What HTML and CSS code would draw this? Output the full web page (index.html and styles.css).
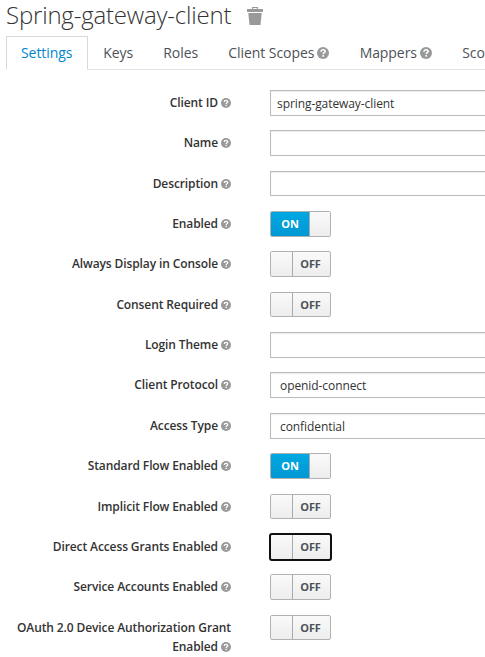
FILE: index.html
```html
<!DOCTYPE html>
<html lang="en">
<head>
<meta charset="utf-8">
<title>Spring-gateway-client</title>
<link rel="stylesheet" href="styles.css">
</head>
<body>
<svg class="defs" width="0" height="0">
  <symbol id="help" viewBox="0 0 12 12">
    <circle cx="6" cy="6" r="6" fill="#999"/>
    <path d="M4 4.7C4 3.4 4.9 2.8 6 2.8S8.1 3.4 8.1 4.5C8.1 5.7 6.2 5.7 6.2 7.1M6.2 8.1V9.7" fill="none" stroke="#fff" stroke-width="1.6"/>
  </symbol>
</svg>
<h1>Spring-gateway-client <svg class="trash" viewBox="0 0 16 18"><path fill="#999" fill-rule="evenodd" d="M0 2h5V0h6v2h5v3H0zM6.2 1.1V2h3.6v-.9zM1.3 6h13.4l-1.2 12H2.5z"/></svg></h1>
<ul class="tabs">
  <li class="active">Settings</li>
  <li>Keys</li>
  <li>Roles</li>
  <li>Client Scopes <svg class="help"><use href="#help"/></svg></li>
  <li>Mappers <svg class="help"><use href="#help"/></svg></li>
  <li>Sco</li>
</ul>
<form class="form">
  <div class="row"><label>Client ID <svg class="help"><use href="#help"/></svg></label><div class="field">spring-gateway-client</div></div>
  <div class="row"><label>Name <svg class="help"><use href="#help"/></svg></label><div class="field"></div></div>
  <div class="row"><label>Description <svg class="help"><use href="#help"/></svg></label><div class="field"></div></div>
  <div class="row"><label>Enabled <svg class="help"><use href="#help"/></svg></label><div class="switch on"><span class="state">ON</span><span class="knob"></span></div></div>
  <div class="row"><label>Always Display in Console <svg class="help"><use href="#help"/></svg></label><div class="switch"><span class="knob"></span><span class="state">OFF</span></div></div>
  <div class="row"><label>Consent Required <svg class="help"><use href="#help"/></svg></label><div class="switch"><span class="knob"></span><span class="state">OFF</span></div></div>
  <div class="row"><label>Login Theme <svg class="help"><use href="#help"/></svg></label><div class="field"></div></div>
  <div class="row"><label>Client Protocol <svg class="help"><use href="#help"/></svg></label><div class="field select">openid-connect</div></div>
  <div class="row"><label>Access Type <svg class="help"><use href="#help"/></svg></label><div class="field select">confidential</div></div>
  <div class="row"><label>Standard Flow Enabled <svg class="help"><use href="#help"/></svg></label><div class="switch on"><span class="state">ON</span><span class="knob"></span></div></div>
  <div class="row"><label>Implicit Flow Enabled <svg class="help"><use href="#help"/></svg></label><div class="switch"><span class="knob"></span><span class="state">OFF</span></div></div>
  <div class="row"><label>Direct Access Grants Enabled <svg class="help"><use href="#help"/></svg></label><div class="switch focus"><span class="knob"></span><span class="state">OFF</span></div></div>
  <div class="row"><label>Service Accounts Enabled <svg class="help"><use href="#help"/></svg></label><div class="switch"><span class="knob"></span><span class="state">OFF</span></div></div>
  <div class="row"><label>OAuth 2.0 Device Authorization Grant Enabled <svg class="help"><use href="#help"/></svg></label><div class="switch"><span class="knob"></span><span class="state">OFF</span></div></div>
</form>
</body>
</html>
```
FILE: styles.css
```css
* { box-sizing: border-box; }
html, body { height: 657px; overflow: hidden; }
body { margin: 0; background: #fff; color: #333; font: 12px/19px "Open Sans", sans-serif; }
.defs { display: block; height: 0; }
h1 { display: flex; align-items: center; gap: 16px; margin: 0; height: 36px; padding: 0 0 6px 6px; font-size: 24px; line-height: 30px; font-weight: 300; letter-spacing: -.19px; white-space: nowrap; }
.trash { width: 16px; height: 18px; margin-top: 1px; }
.tabs { display: flex; height: 34px; margin: 0 0 0 6px; padding: 0; list-style: none; border-bottom: 1px solid #e4e4e4; font-size: 14px; letter-spacing: -.07px; color: #4d5258; }
.tabs li { flex: none; height: 34px; padding: 7px 15.15px 0; line-height: 20px; white-space: nowrap; }
.tabs li:last-child { padding-right: 0; }
.tabs .active { width: 82px; color: #0088ce; border: 1px solid #d8d8d8; border-bottom-color: #fff; background: #fff; padding: 6px 14px 0; }
.help { width: 10px; height: 10px; vertical-align: -1px; }
.tabs .help { width: 12px; height: 12px; margin-left: -.5px; vertical-align: -1px; }
.form { padding-top: 19.85px; overflow: hidden; }
.row { display: flex; align-items: flex-start; height: 25.375px; margin-bottom: 15px; }
.row:last-child { height: auto; margin: 0; }
label { width: 231px; padding-top: 3px; margin-right: 39px; flex: none; text-align: right; font-weight: 600; letter-spacing: -.11px; }
.field { flex: 1; height: 25.66px; border: 1px solid #bbb; border-right: 0; border-radius: 1px 0 0 1px; padding: 3px 6px; box-shadow: inset 0 1px 1px rgba(3,3,3,.075); line-height: 19px; letter-spacing: -.08px; }
.select { padding-left: 9px; }
.switch { display: flex; flex: none; width: 61px; height: 25.66px; border: 1px solid #b1b1b1; border-radius: 2px; overflow: hidden; background: linear-gradient(#fafafa, #ededed); }
.knob { width: 22px; border-right: 1px solid #aaa; background: linear-gradient(#fafafa, #ededed); }
.state { flex: 1; padding-right: 2px; text-align: center; font-size: 11px; line-height: 24px; font-weight: 700; letter-spacing: -.1px; color: #4d5258; }
.on .state { padding: 0; color: #fff; background: linear-gradient(#00a8e1, #0098d4); }
.on .knob { width: 21px; border-right: 0; border-left: 1px solid #aaa; }
.focus { outline: 2px solid #101010; outline-offset: -1px; }
```
